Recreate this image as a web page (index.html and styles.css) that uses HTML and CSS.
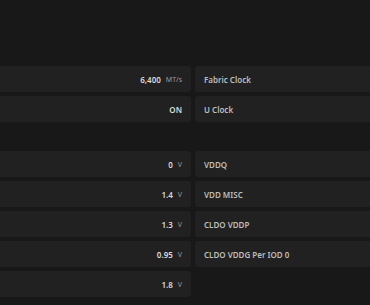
FILE: index.html
```html
<!DOCTYPE html>
<html lang="en">
<head>
  <meta charset="UTF-8">
  <meta name="viewport" content="width=device-width, initial-scale=1.0">
  <title>Memory</title>
  <link rel="stylesheet" href="styles.css">
</head>
<body>

  <div class="panel">
    <div class="section">
      <div class="grid">
        <div class="cell value"><b>6,400</b><span class="unit">MT/s</span></div>
        <div class="cell label">Fabric Clock</div>
        <div class="cell value"><b>ON</b></div>
        <div class="cell label">U Clock</div>
      </div>
    </div>

    <div class="section">
      <div class="grid">
        <div class="cell value"><b>0</b><span class="unit">V</span></div>
        <div class="cell label">VDDQ</div>
        <div class="cell value"><b>1.4</b><span class="unit">V</span></div>
        <div class="cell label">VDD MISC</div>
        <div class="cell value"><b>1.3</b><span class="unit">V</span></div>
        <div class="cell label">CLDO VDDP</div>
        <div class="cell value"><b>0.95</b><span class="unit">V</span></div>
        <div class="cell label">CLDO VDDG Per IOD 0</div>
        <div class="cell value"><b>1.8</b><span class="unit">V</span></div>
      </div>
    </div>
  </div>

</body>
</html>
```

FILE: styles.css
```css
html, body {
  margin: 0;
  background: #181818;
  overflow: hidden;
}

body {
  font-family: "Noto Sans", "Open Sans", sans-serif;
  font-size: 8px;
  color: #c4c4c4;
}

.panel {
  width: 402px;
  margin-left: -8px;
  padding-top: 66px;
}

.section {
  margin-bottom: 29px;
}

.section:last-child {
  margin-bottom: 0;
}

.grid {
  display: grid;
  grid-template-columns: 1fr 1fr;
  gap: 4px;
}

.cell {
  height: 26px;
  display: flex;
  align-items: center;
  background: #212121;
  border-radius: 3px;
}

.value {
  justify-content: flex-end;
  padding-right: 9px;
}

.value b {
  font-weight: 600;
  color: #dcdcdc;
}

.unit {
  margin-left: 5px;
  font-size: 7px;
  color: #9a9a9a;
}

.label {
  padding-left: 9px;
  font-weight: 600;
  color: #bdbdbd;
}
```
